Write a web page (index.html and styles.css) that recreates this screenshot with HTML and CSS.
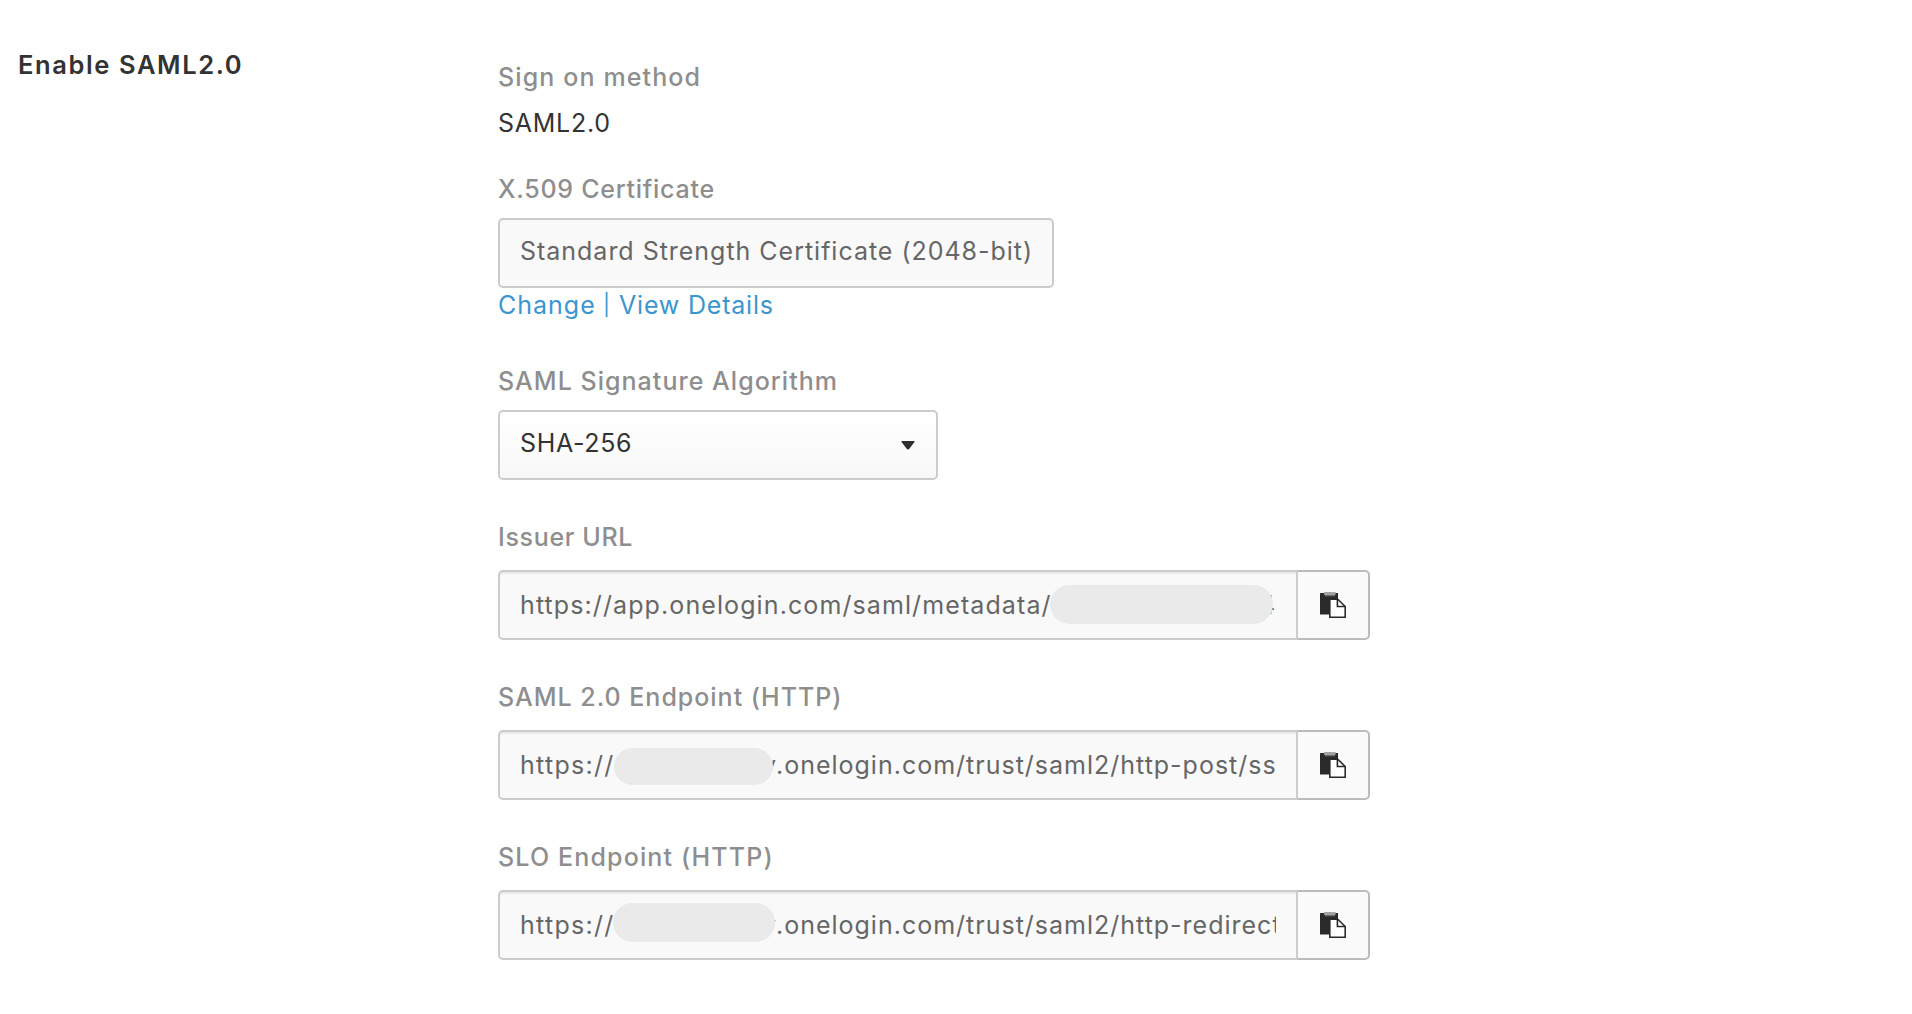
FILE: index.html
```html
<!DOCTYPE html>
<html lang="en">
<head>
<meta charset="utf-8">
<title>Enable SAML2.0</title>
<link rel="stylesheet" href="styles.css">
</head>
<body>
<svg class="symbols" aria-hidden="true">
  <symbol id="paste" viewBox="0 0 26 26">
    <path fill="#2b2b2b" d="M0 1.5Q0 1 .5 1H18v6h-8v15.500H.5Q0 22.500 0 22Z"/>
    <path fill="#a3a3a3" d="M4 0h11.500v3H4Z"/>
    <path fill="#6c6c6c" d="M5 3h10v1.300H5Z"/>
    <path fill="#fff" stroke="#2b2b2b" stroke-width="1.600" d="M9.800 7.300h8L25.200 14.500v10.700H9.800Z"/>
    <path fill="none" stroke="#2b2b2b" stroke-width="1.600" d="M17.400 7.500v7h7.600"/>
  </symbol>
</svg>
<main class="page">
  <h1 class="title">Enable SAML2.0</h1>
  <section class="fields">
    <div class="field sign-on">
      <div class="label t-sign">Sign on method</div>
      <div class="value">SAML2.0</div>
    </div>
    <div class="field certificate">
      <div class="label t-x509">X.509 Certificate</div>
      <div class="box cert">Standard Strength Certificate (2048-bit)</div>
      <div class="links"><a class="change">Change</a><span class="bar">|</span><a class="view">View Details</a></div>
    </div>
    <div class="field algorithm">
      <div class="label t-alg">SAML Signature Algorithm</div>
      <div class="box select"><span>SHA-256</span>
        <svg class="caret" viewBox="0 0 16 10"><path fill="#2f2f2f" d="M1.500 0h13Q16 0 15.200 1.200L9.500 8.600Q8 10.200 6.500 8.600L.8 1.200Q0 0 1.500 0Z"/></svg>
      </div>
    </div>
    <div class="field url">
      <div class="label t-issuer">Issuer URL</div>
      <div class="group">
        <div class="input"><span class="address">https://app.onelogin.com/saml/metadata/</span><span class="tail">4</span></div>
        <button class="copy" aria-label="Copy"><svg class="icon"><use href="#paste"/></svg></button>
        <span class="mask mask-issuer"></span>
      </div>
    </div>
    <div class="field url">
      <div class="label t-saml">SAML 2.0 Endpoint (HTTP)</div>
      <div class="group">
        <div class="input"><span class="scheme">https://</span><span class="host">v.onelogin.com/trust/saml2/http-post/ss</span></div>
        <button class="copy" aria-label="Copy"><svg class="icon"><use href="#paste"/></svg></button>
        <span class="mask mask-saml"></span>
      </div>
    </div>
    <div class="field url">
      <div class="label t-slo">SLO Endpoint (HTTP)</div>
      <div class="group">
        <div class="input"><span class="scheme">https://</span><span class="host clipped">v.onelogin.com/trust/saml2/http-redirect</span></div>
        <button class="copy" aria-label="Copy"><svg class="icon"><use href="#paste"/></svg></button>
        <span class="mask mask-slo"></span>
      </div>
    </div>
  </section>
</main>
</body>
</html>
```
FILE: styles.css
```css
* { box-sizing: border-box; }
body {
  margin: 0;
  background: #fff;
  font: 400 25px/30px Inter, sans-serif;
  letter-spacing: .95px;
  color: #333;
}
.symbols { display: none; }
.page {
  display: grid;
  grid-template-columns: 480px 872px;
  padding: 50px 0 0 18px;
}
.title {
  margin: 0;
  font-size: 25.500px;
  font-weight: 600;
  letter-spacing: 1.600px;
}
.fields {
  display: flex;
  flex-direction: column;
  padding-top: 12px;
  white-space: nowrap;
}
.label { font-weight: 500; color: #8e8e8e; }
.t-sign { letter-spacing: 1.12px; }
.t-x509 { letter-spacing: .73px; }
.t-alg { letter-spacing: 1.03px; }
.t-issuer { letter-spacing: .65px; }
.t-saml { letter-spacing: .98px; }
.t-slo { letter-spacing: 1.15px; }

.sign-on { margin-bottom: 36px; }
.value { margin-top: 16px; letter-spacing: .75px; }
.certificate { margin-bottom: 46px; }
.algorithm { margin-bottom: 42px; }
.url { margin-bottom: 42px; }
.url:last-child { margin-bottom: 0; }

.box {
  display: flex;
  align-items: center;
  height: 70px;
  margin-top: 14px;
  border: 2px solid #c9cbcd;
  border-radius: 5px;
  padding: 0 20px 4px;
}
.cert { width: 556px; background: #f9f9f9; color: #666; letter-spacing: .98px; }
.select {
  width: 440px;
  justify-content: space-between;
  border-color: #ccc;
  background: linear-gradient(#fff, #f8f8f8);
  letter-spacing: .65px;
}
.caret { width: 16px; height: 9px; margin-top: 4px; }

.links { display: flex; margin-top: 2px; color: #3c96cd; }
.change { width: 105px; letter-spacing: 1px; }
.bar { width: 16px; font-size: 21px; }
.view { letter-spacing: .8px; }

.group { position: relative; display: flex; margin-top: 18px; }
.input {
  display: flex;
  align-items: center;
  width: 800px;
  height: 70px;
  padding: 0 20px;
  border: 2px solid #ccc;
  border-radius: 5px 0 0 5px;
  background: #f9f9f9;
  box-shadow: inset 0 2px #ebebeb;
  color: #666;
}
.input span { flex: none; }
.address { width: 739px; letter-spacing: 1.1px; }
.scheme { width: 242px; letter-spacing: 1.3px; }
.host { width: 514px; letter-spacing: 1px; }
.clipped { overflow: hidden; }
.tail { width: 17px; }
.copy {
  display: flex;
  align-items: center;
  width: 72px;
  height: 70px;
  padding: 0 0 0 22px;
  border: 2px solid #bbb;
  border-left: 0;
  border-radius: 0 5px 5px 0;
  background: #fafafa;
}
.icon { width: 26px; height: 26px; }

/* Redacted parts of the addresses */
.mask {
  position: absolute;
  border-radius: 20px;
  background: #eaeaea;
}
.mask-issuer { left: 552px; top: 15px; width: 223px; height: 39px; }
.mask-saml { left: 116px; top: 18px; width: 159px; height: 37px; }
.mask-slo { left: 115px; top: 13px; width: 162px; height: 39px; }
```
